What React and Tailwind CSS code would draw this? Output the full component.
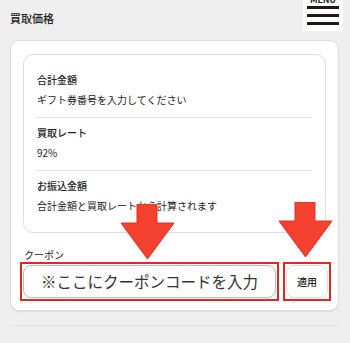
import React from 'react';

const rows = [
    { label: '合計金額', value: 'ギフト券番号を入力してください' },
    { label: '買取レート', value: '92%' },
    { label: 'お振込金額', value: '合計金額と買取レートから計算されます' },
];

function Arrow({ className }) {
    return (
        <svg className={className} width="56" height="56" viewBox="0 0 56 56">
            <path d="M16 0 H36 V19 H53 L26.5 55 L0 19 H16 Z" fill="#f4402f" stroke="#e2301f" strokeWidth="1" />
        </svg>
    );
}

export default function App() {
    return (
        <div
            className="relative w-[350px] h-[343px] overflow-hidden bg-[#efefef] text-[#222]"
            style={{ fontFamily: '"Noto Sans CJK JP", "Noto Sans", sans-serif' }}
        >
            <div className="pt-[11px] pl-[10px]">
                <h2 className="text-[11px] leading-[14px] font-medium">買取価格</h2>
            </div>

            {/* menu button */}
            <div className="absolute left-[303px] top-0 w-[40px] h-[31px] bg-white flex flex-col items-center">
                <span className="text-[9px] leading-[9px] font-bold -mt-[5px] tracking-tight">MENU</span>
                <div className="mt-[2px] flex flex-col gap-[5px]">
                    <div className="w-[32px] h-[3px] bg-[#231815]" />
                    <div className="w-[32px] h-[3px] bg-[#231815]" />
                    <div className="w-[32px] h-[3px] bg-[#231815]" />
                </div>
            </div>

            <div className="mt-[15px] mx-[10px] w-[329px] h-[271px] bg-white border border-[#dcdcdc] rounded-[9px] shadow-[0_1px_1px_rgba(0,0,0,0.08)]">
                <div className="mt-[13px] ml-[12px] w-[303px] h-[179px] border border-[#dedede] rounded-[10px] bg-white px-[13px] pt-[10px]">
                    {rows.map((row, i) => (
                        <div
                            key={row.label}
                            className={i < rows.length - 1 ? 'pt-[8px] pb-[10px] border-b border-[#e6e6e6]' : 'pt-[8px]'}
                        >
                            <div className="text-[10px] leading-[14px] font-medium">{row.label}</div>
                            <div className="mt-[6px] text-[10px] leading-[14px]">{row.value}</div>
                        </div>
                    ))}
                </div>

                <div className="mt-[15px] pl-[13px] text-[10px] leading-[14px]">クーポン</div>

                <div className="flex pl-[9px] gap-[4px]">
                    <div className="w-[259px] h-[39px] border-2 border-[#e5261f] p-px">
                        <div className="h-full rounded-[8px] border border-[#bdbdbd] bg-[#fdfdfd] flex items-center justify-center text-[15.5px] text-[#333]">
                            ※ここにクーポンコードを入力
                        </div>
                    </div>
                    <div className="w-[48px] h-[39px] border-2 border-[#e5261f] p-px">
                        <div className="h-full rounded-[8px] border border-[#dcdcdc] bg-white flex items-center justify-center text-[10px] font-medium">
                            適用
                        </div>
                    </div>
                </div>
            </div>

            <div className="mt-[14px] mx-[10px] w-[329px] h-px bg-[#e2e2e2]" />

            <Arrow className="absolute left-[121px] top-[204px]" />
            <Arrow className="absolute left-[279px] top-[202px]" />
        </div>
    );
}
